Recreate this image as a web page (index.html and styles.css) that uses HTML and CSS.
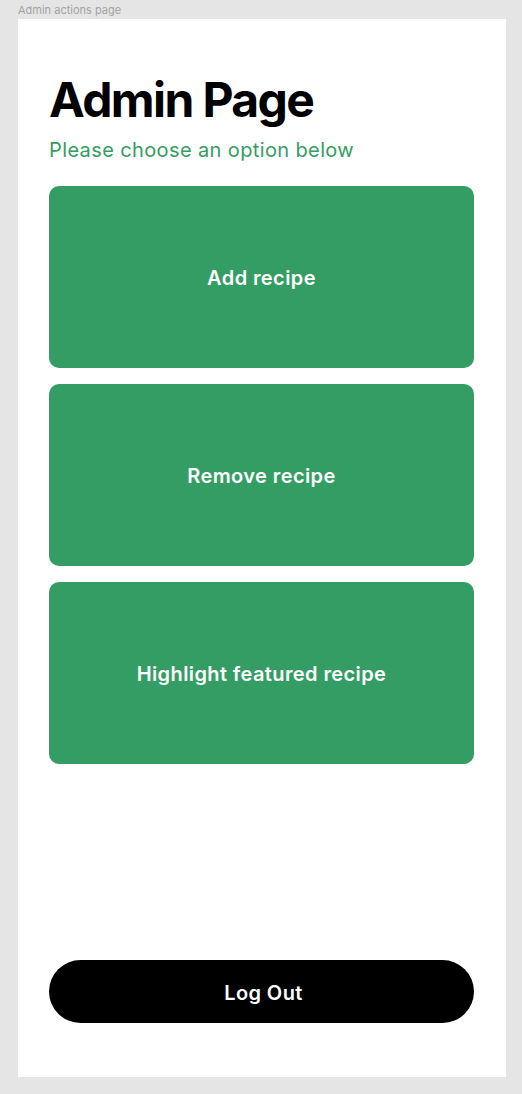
FILE: index.html
```html
<!DOCTYPE html>
<html>
<head>
<meta charset="utf-8">
<link rel="stylesheet" href="styles.css">
</head>
<body>
<div class="label">Admin actions page</div>
<main class="frame">
  <h1 class="title">Admin Page</h1>
  <p class="subtitle">Please choose an option below</p>
  <div class="actions">
    <button class="action">Add recipe</button>
    <button class="action">Remove recipe</button>
    <button class="action">Highlight featured recipe</button>
  </div>
  <button class="logout">Log Out</button>
</main>
</body>
</html>
```
FILE: styles.css
```css
* { box-sizing: border-box; }
html, body {
  margin: 0;
  padding: 0;
  background: #e5e5e5;
  font-family: Inter, "Noto Sans", sans-serif;
}
body {
  width: 522px;
  height: 1094px;
  overflow: hidden;
}
.label {
  height: 19px;
  padding: 4px 0 0 18px;
  font-size: 11px;
  line-height: 13px;
  color: #a3a3a3;
}
.frame {
  margin-left: 18px;
  width: 488px;
  height: 1058px;
  background: #ffffff;
  padding: 52px 32px 54px 31px;
  display: flex;
  flex-direction: column;
}
.title {
  margin: 0;
  font-size: 48px;
  line-height: 58px;
  font-weight: 700;
  letter-spacing: -1.6px;
  color: #000;
}
.subtitle {
  margin: 9px 0 0 0;
  font-size: 20px;
  line-height: 24px;
  font-weight: 400;
  letter-spacing: 0.38px;
  color: #349d63;
}
.actions {
  margin-top: 24px;
  display: flex;
  flex-direction: column;
  gap: 16px;
}
.action {
  height: 182px;
  border: none;
  border-radius: 10px;
  background: #349d63;
  color: #fff;
  font-family: inherit;
  font-size: 20px;
  font-weight: 600;
  letter-spacing: 0.4px;
  padding: 2px 0 0 0;
}
.logout {
  margin-top: auto;
  height: 63px;
  border: none;
  border-radius: 32px;
  background: #000;
  color: #fff;
  font-family: inherit;
  font-size: 20px;
  font-weight: 600;
  letter-spacing: 0.4px;
  padding: 2px 0 0 4px;
}
```
